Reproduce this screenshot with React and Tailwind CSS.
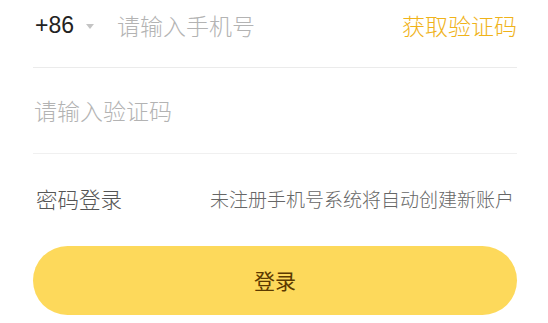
// Phone + SMS code login form. Top of the card is cut off in the frame, so the
// first row sits a little high against its divider.

const cjk = { fontFamily: '"Noto Sans CJK SC", "Liberation Sans", sans-serif' }

export default function App() {
  return (
    <div className="h-[323px] w-[548px] overflow-hidden bg-white pl-[33px] pr-[31px]" style={cjk}>
      <div className="flex h-[68px] items-center border-b border-[#ebebeb] pb-[16px]">
        <span className="pl-[2px] text-[23px] text-[#222]" style={{ fontFamily: '"Liberation Sans", sans-serif' }}>
          +86
        </span>
        <svg width="8" height="5" viewBox="0 0 8 5" className="ml-[12px] mt-[1px]">
          <path d="M0 0h8L4 5z" fill="#c4c4c4" />
        </svg>
        <span className="ml-[23px] flex-1 text-[23px] font-light text-[#b3b3b3]">请输入手机号</span>
        <span className="text-[23px] font-light text-[#f0b31a]">获取验证码</span>
      </div>

      <div className="flex h-[86px] items-center border-b border-[#f0f0f0]">
        <span className="pl-[1px] text-[23px] font-light text-[#b3b3b3]">请输入验证码</span>
      </div>

      <div className="flex h-[92px] items-center justify-between pb-[1px]">
        <span className="pl-[3px] text-[21.5px] font-light text-[#555]">密码登录</span>
        <span className="pr-[3px] text-[19px] font-light text-[#666]">未注册手机号系统将自动创建新账户</span>
      </div>

      <button className="flex h-[69px] w-full items-center justify-center rounded-full bg-[#fdd95b] text-[21px] text-[#5c3a00]">
        登录
      </button>
    </div>
  )
}
